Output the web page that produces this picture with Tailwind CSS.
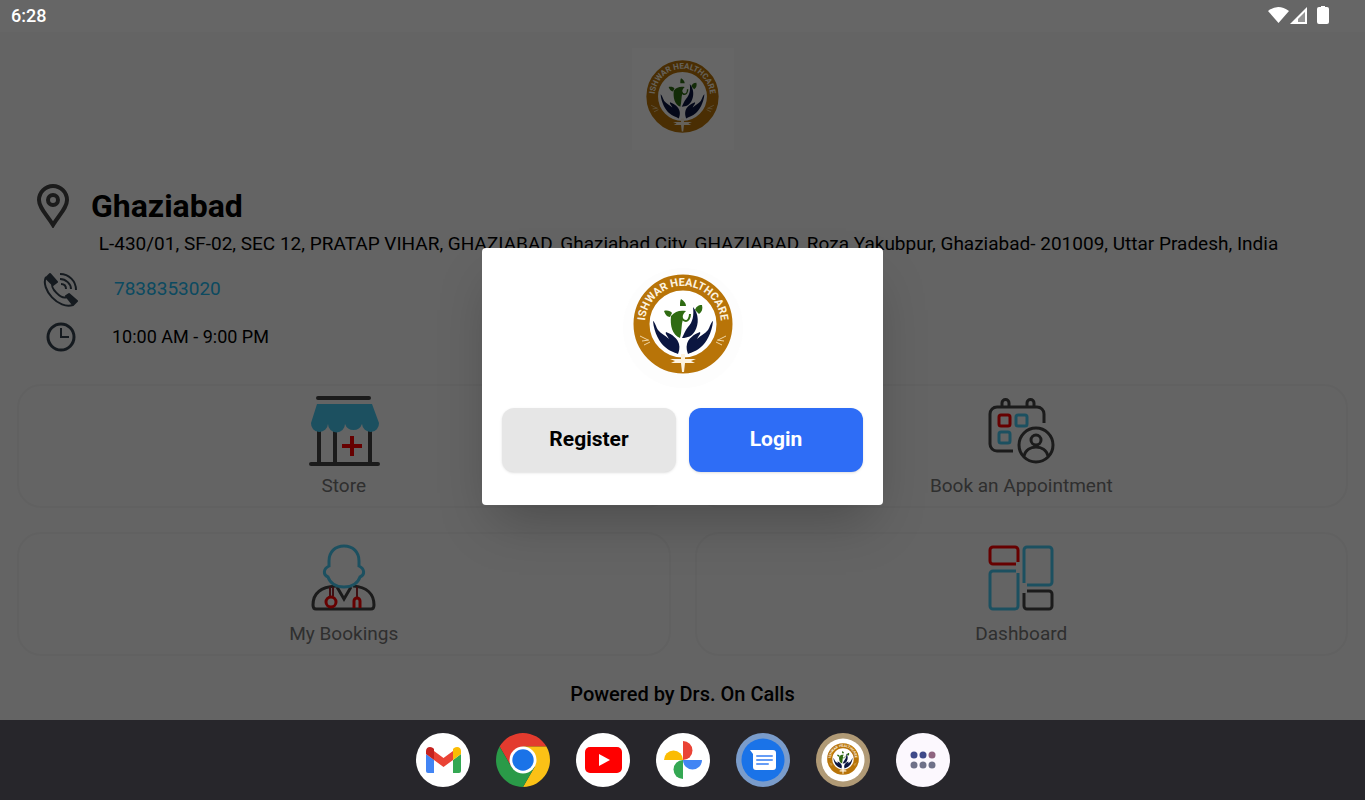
<!DOCTYPE html>
<html lang="en">
<head>
    <meta charset="UTF-8">
    <meta name="viewport" content="width=device-width, initial-scale=1.0">
    <title>Ishwar Healthcare</title>
    <script src="https://cdn.jsdelivr.net/npm/@tailwindcss/browser@4"></script>
</head>
<body class="min-h-screen flex flex-col bg-[#fafafa] font-[Roboto,sans-serif]">

    <!-- shared logo -->
    <svg class="hidden">
        <symbol id="logo" viewBox="0 0 100 100">
            <circle cx="50" cy="50" r="41.500" fill="#fff" stroke="#b87408" stroke-width="16"/>
            <path id="ring" d="M12.500 56A38 38 0 1 1 87.500 56" fill="none"/>
            <text font-size="11" font-weight="700" fill="#fdf3e0" font-family="Roboto, sans-serif"><textPath href="#ring" startOffset="50%" text-anchor="middle">ISHWAR HEALTHCARE</textPath></text>
            <path d="M38 42c4-5 9-6 15-5-3 3-4 5-3 8-2 6-1 13-3 19-8-3-10-13-9-22z" fill="#2f6b12"/>
            <path d="M60 33c6 7 6 17 2 24-3 5-7 7-13 7 2-4 3-7 6-11 5-5 6-12 5-20z" fill="#0b1640"/>
            <path d="M48 42c1 3 3 5 5 5s4-3 4-7" fill="none" stroke="#2f6b12" stroke-width="2"/>
            <path d="M48 25c3 2 5 4 5 7h-6c0-3 0-5 1-7zM31 37c3-1 7 0 8 2l-2 4c-3 0-5-3-6-6zM69 31c-4 0-6 2-7 5l4 4c3-2 4-5 3-9z" fill="#2f6b12"/>
            <path id="hand" d="M20 47c2 1 3 6 5 9 3 4 7 5 11 9-2-4-4-5-3-7 6 2 12 7 13 12 1 4 0 7-1 10-4-2-9-3-13-7-5-4-11-14-12-26z" fill="#0b1640"/>
            <use href="#hand" transform="matrix(-1 0 0 1 100 0)"/>
            <path d="M48 80h4v5h11l-5 2 4 2H52l-1 9h-2l-1-9H38l4-2-5-2h11z" fill="#fdf3e0"/>
            <path d="M7 62l8 4M9 67l7-1M11 71l6-3M93 62l-8 4M91 67l-7-1M89 71l-6-3" stroke="#f0d6a4" stroke-width="1"/>
        </symbol>
    </svg>

    <div class="relative flex-1 flex flex-col">
        <div class="h-8 bg-white"></div>

        <main class="flex-1 flex flex-col">
            <div class="mt-4 mx-auto size-[102px] pt-3 bg-white">
                <svg class="mx-auto size-[73px]" role="img" aria-label="Ishwar Healthcare"><use href="#logo"/></svg>
            </div>

            <section class="mt-8 px-9 text-[19px] text-black">
                <div class="flex items-center h-12">
                    <svg class="w-[34px] h-11" viewBox="0 0 34 44" fill="none" stroke="#444">
                        <path d="M17 41C11 31 3 24 3 16a14 14 0 0 1 28 0c0 8-8 15-14 25z" stroke-width="4"/>
                        <circle cx="17" cy="16" r="5" stroke-width="4"/>
                    </svg>
                    <h1 class="ml-[21px] text-[32px] leading-10 font-bold">Ghaziabad</h1>
                </div>
                <p class="pl-3 text-center leading-7">L-430/01, SF-02, SEC 12, PRATAP VIHAR, GHAZIABAD, Ghaziabad City, GHAZIABAD, Roza Yakubpur, Ghaziabad- 201009, Uttar Pradesh, India</p>
                <div class="flex items-center h-[47px] mt-2 pl-[6px]">
                    <svg class="size-9" viewBox="0 0 36 36" fill="none" stroke="#36434f">
                        <path d="M4 5C-2 17 17 38 31 33" stroke-width="2"/>
                        <path d="M11 11c-4 4 8 17 14 14" stroke-width="2"/>
                        <path d="M4 6l4-4 7 8-4 3zM24 24l3-2 8 7-4 4z" fill="#36434f" stroke-width="2" stroke-linejoin="round"/>
                        <path d="M18 2c9 0 16 7 16 16M18 7c6 0 11 5 11 10M19 12c3 0 5 2 5 5" stroke-width="2"/>
                    </svg>
                    <a href="tel:7838353020" class="ml-9 text-[#20b8f0]">7838353020</a>
                </div>
                <div class="flex items-center h-[47px] pl-[10px]">
                    <svg class="size-[30px]" viewBox="0 0 30 30" fill="none" stroke="#36434f">
                        <circle cx="15" cy="15" r="13" stroke-width="3"/>
                        <path d="M15 6v9h8" stroke-width="2"/>
                    </svg>
                    <p class="ml-9 text-lg">10:00 AM - 9:00 PM</p>
                </div>
            </section>

            <nav class="mt-6 px-[17px] grid grid-cols-2 gap-6 text-[19px] text-[#757575]">
                <a href="#store" class="flex flex-col items-center h-31 pt-2 rounded-3xl border-2 border-[#f2f2f2]">
                    <svg class="size-[72px]" viewBox="0 0 72 72" fill="none">
                        <path d="M10 4h51M11 32v38M27 32v38M62 32v38M3 70h67" stroke="#444" stroke-width="4" stroke-linecap="round"/>
                        <path d="M9 10h55l7 19a8 8 0 0 1-17 1 9 9 0 0 1-17 0 8 8 0 0 1-17 0 8 8 0 0 1-17-1z" fill="#48c8f0"/>
                        <path d="M34 52h20M44 42v20" stroke="#f00" stroke-width="4"/>
                    </svg>
                    <span class="mt-2 leading-6">Store</span>
                </a>
                <a href="#appointment" class="flex flex-col items-center h-31 pt-2 rounded-3xl border-2 border-[#f2f2f2]">
                    <svg class="size-[72px]" viewBox="0 0 72 72" fill="none" stroke="#444" stroke-width="3">
                        <path d="M28 57H12a7 7 0 0 1-7-7V20a7 7 0 0 1 7-7h40a7 7 0 0 1 7 7v9"/>
                        <path d="M17 13V9a3 3 0 0 1 7 0v4M42 13V9a3 3 0 0 1 7 0v4"/>
                        <rect x="14" y="21" width="11" height="11" rx="2" stroke="#f00"/>
                        <rect x="31" y="21" width="11" height="11" rx="2" stroke="#48c8f0"/>
                        <rect x="14" y="38" width="11" height="11" rx="2" stroke="#48c8f0"/>
                        <circle cx="51" cy="51" r="17"/>
                        <circle cx="51" cy="46" r="5"/>
                        <path d="M39 62c3-12 21-12 24 0"/>
                    </svg>
                    <span class="mt-2 leading-6">Book an Appointment</span>
                </a>
                <a href="#bookings" class="flex flex-col items-center h-31 pt-2 rounded-3xl border-2 border-[#f2f2f2]">
                    <svg class="size-[72px]" viewBox="0 0 72 72" fill="none" stroke="#444" stroke-width="3">
                        <path d="M28 44C12 45 5 52 5 63q0 4 3 4h55q3 0 3-4c0-11-7-18-21-19M29 45l7 12 7-12"/>
                        <path d="M36 4c-9 0-15 6-15 15v5c-6 3-6 9-1 11 2 6 8 10 16 10s14-4 16-10c5-2 5-8-1-11v-5c0-9-6-15-15-15z" stroke="#48c8f0"/>
                        <path d="M22 45v9M25 45v9M49 45v10" stroke="#9c2a30" stroke-width="2"/>
                        <circle cx="23" cy="60" r="5" stroke="#f00"/>
                        <path d="M46 66v-7a3 3 0 0 1 6 0v7" stroke="#f00"/>
                    </svg>
                    <span class="mt-2 leading-6">My Bookings</span>
                </a>
                <a href="#dashboard" class="flex flex-col items-center h-31 pt-2 rounded-3xl border-2 border-[#f2f2f2]">
                    <svg class="size-[72px]" viewBox="0 0 72 72" fill="none" stroke-width="3">
                        <path d="M31 22H8a3 3 0 0 1-3-3V8a3 3 0 0 1 3-3h22a3 3 0 0 1 3 3v12" stroke="#f00"/>
                        <path d="M39 41V8a3 3 0 0 1 3-3h22a3 3 0 0 1 3 3v32a3 3 0 0 1-3 3H42M31 29H8a3 3 0 0 0-3 3v32a3 3 0 0 0 3 3h22a3 3 0 0 0 3-3V31" stroke="#48c8f0"/>
                        <path d="M42 49h22a3 3 0 0 1 3 3v12a3 3 0 0 1-3 3H42a3 3 0 0 1-3-3V51" stroke="#444"/>
                    </svg>
                    <span class="mt-2 leading-6">Dashboard</span>
                </a>
            </nav>

            <p class="pt-6 pb-3 text-center text-xl leading-7 font-medium text-black">Powered by Drs. On Calls</p>
        </main>

        <!-- dimmed backdrop with the dialog -->
        <div class="absolute inset-0 flex items-center justify-center pt-8 bg-black/60">
            <div role="dialog" aria-label="Sign in" class="w-[401px] h-[257px] px-5 pt-5 bg-white rounded-sm shadow-2xl">
                <div class="mx-auto size-[120px] pt-[6px] rounded-full bg-[#fdfdfd]">
                    <svg class="mx-auto size-[100px]" role="img" aria-label="Ishwar Healthcare"><use href="#logo"/></svg>
                </div>
                <div class="mt-5 flex gap-[13px] text-[21px] font-bold">
                    <button type="button" class="flex-1 h-16 rounded-xl bg-[#e6e6e6] text-black shadow">Register</button>
                    <button type="button" class="flex-1 h-16 rounded-xl bg-[#2e6df6] text-white shadow">Login</button>
                </div>
            </div>
        </div>

        <!-- status bar -->
        <div class="absolute inset-x-0 top-0 h-8 flex items-center pl-[11px] pr-9 text-white">
            <span class="flex-1 text-lg leading-8 font-medium">6:28</span>
            <svg class="w-[61px] h-5" viewBox="0 0 61 20" fill="#fff">
                <path d="M0 5q10-8 21 0L10.500 17z"/>
                <path d="M39 1v17H22zM37 6l-7 7v3h7z" fill-rule="evenodd"/>
                <path d="M37 6l-7 7v3h7z" fill-opacity=".3"/>
                <path d="M51 1h2V0h4v1h2q2 0 2 2v13q0 2-2 2h-8q-2 0-2-2V3q0-2 2-2z"/>
            </svg>
        </div>
    </div>

    <footer class="h-20 flex items-center justify-center gap-[26px] bg-[#27262b]">
        <button type="button" aria-label="Gmail" class="size-[54px] rounded-full bg-white">
            <svg viewBox="0 0 54 54">
                <path d="M10 21v17a2 2 0 0 0 2 2h6V27z" fill="#4285f4"/>
                <path d="M45 21v17a2 2 0 0 1-2 2h-6V27z" fill="#34a853"/>
                <path d="M18 18l9.500 7 9.500-7v9l-9.500 7-9.500-7z" fill="#ea4335"/>
                <path d="M10 18c0-4 4-5 7-3l1 1v11l-8-6z" fill="#c5221f"/>
                <path d="M45 18c0-4-4-5-7-3l-1 1v11l8-6z" fill="#fbbc04"/>
            </svg>
        </button>
        <button type="button" aria-label="Chrome" class="size-[54px] rounded-full">
            <svg viewBox="0 0 48 48">
                <path d="M24 12h20.780A24 24 0 0 0 3.220 12l10.380 18z" fill="#e33b2e"/>
                <path d="M34.400 30L24 48A24 24 0 0 0 44.780 12H24z" fill="#fbc116"/>
                <path d="M13.600 30L3.220 12A24 24 0 0 0 24 48l10.400-18z" fill="#2a9a48"/>
                <circle cx="24" cy="24" r="12" fill="#fff"/>
                <circle cx="24" cy="24" r="9.500" fill="#1a73e8"/>
            </svg>
        </button>
        <button type="button" aria-label="YouTube" class="size-[54px] rounded-full bg-white">
            <svg viewBox="0 0 54 54">
                <rect x="9" y="14" width="37" height="26" rx="5" fill="#f00"/>
                <path d="M23 21l11 6-11 6z" fill="#fff"/>
            </svg>
        </button>
        <button type="button" aria-label="Photos" class="size-[54px] rounded-full bg-white">
            <svg viewBox="0 0 54 54">
                <path d="M27 27H8a9.500 9.500 0 0 1 19 0z" fill="#fbbc04"/>
                <path d="M27 27V8a9.500 9.500 0 0 1 0 19z" fill="#ea4335"/>
                <path d="M27 27h19a9.500 9.500 0 0 1-19 0z" fill="#4285f4"/>
                <path d="M27 27v19a9.500 9.500 0 0 1 0-19z" fill="#34a853"/>
            </svg>
        </button>
        <button type="button" aria-label="Messages" class="size-[54px] rounded-full bg-[#7a9ccb]">
            <svg viewBox="0 0 54 54">
                <circle cx="27" cy="27" r="21.500" fill="#1a73e8"/>
                <path d="M14 17h23a3 3 0 0 1 3 3v14a3 3 0 0 1-3 3H20a3 3 0 0 1-3-3V21z" fill="#fff"/>
                <path d="M21 23h15M21 27h15M21 31h11" stroke="#669df6" stroke-width="2" stroke-linecap="round"/>
            </svg>
        </button>
        <button type="button" aria-label="Ishwar Healthcare" class="size-[54px] rounded-full bg-[#b09a76]">
            <svg viewBox="0 0 54 54">
                <circle cx="27" cy="27" r="21.500" fill="#fff"/>
                <use href="#logo" x="11" y="10" width="32" height="32"/>
            </svg>
        </button>
        <button type="button" aria-label="All apps" class="size-[54px] rounded-full bg-[#fcf8fe]">
            <svg viewBox="0 0 54 54" fill="#6f7189">
                <circle cx="18" cy="22" r="3.500" fill="#3f4a8a"/>
                <circle cx="27" cy="22" r="3.500" fill="#3f4a8a"/>
                <circle cx="36" cy="22" r="3.500" fill="#8f6480"/>
                <circle cx="18" cy="32" r="3.500"/>
                <circle cx="27" cy="32" r="3.500"/>
                <circle cx="36" cy="32" r="3.500"/>
            </svg>
        </button>
    </footer>
</body>
</html>
